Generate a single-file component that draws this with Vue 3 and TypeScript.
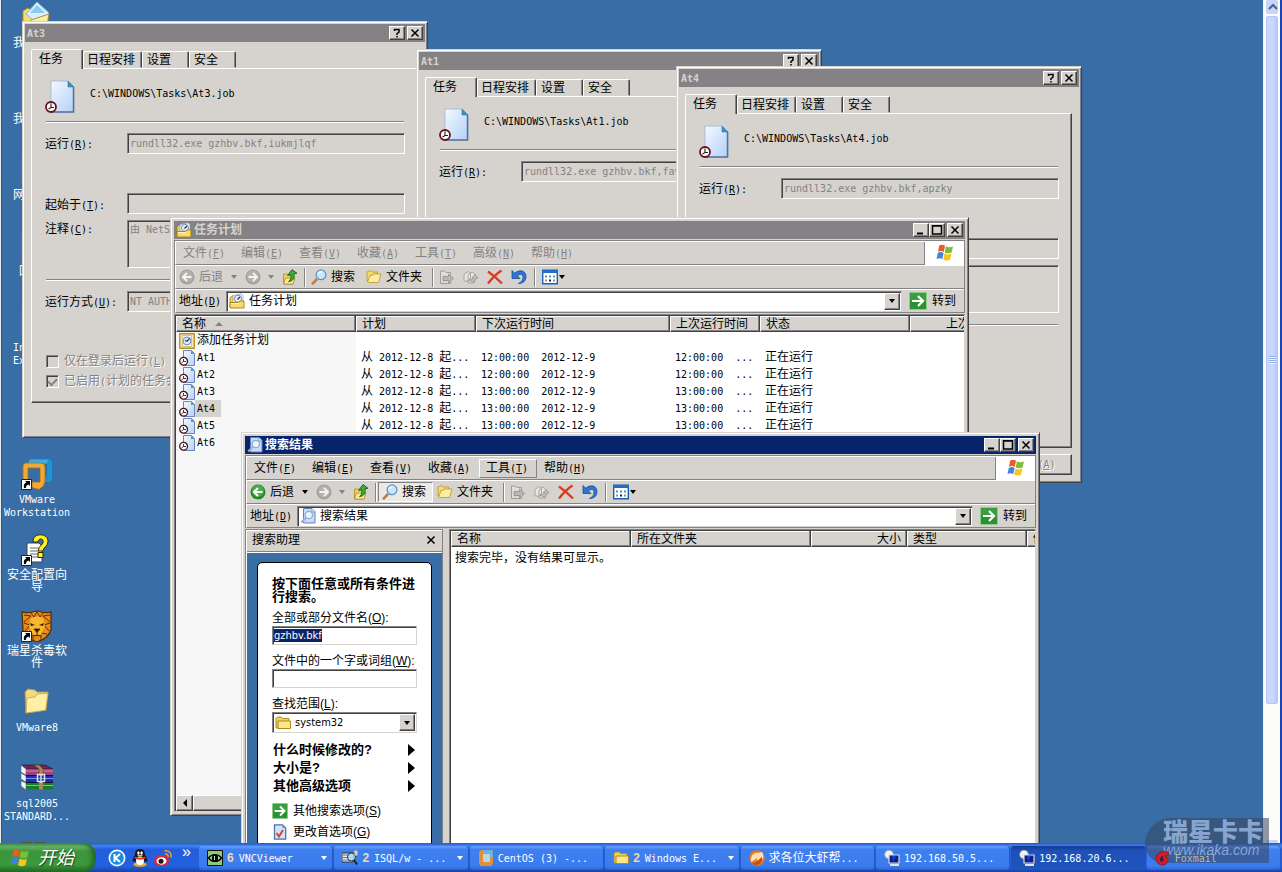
<script setup lang="ts">
import { h, onMounted, ref } from 'vue'
import type { FunctionalComponent } from 'vue'

/* Text whose half-width characters get their own face; "&X" underlines the access key X. */
const T: FunctionalComponent<{ t: string }> = (props) => {
  const runs = props.t.match(/[\x20-\x7e]+|[^\x20-\x7e]+/g) ?? []
  return h(
    'span',
    { class: 'mix' },
    runs.map((run) => {
      if (!/^[\x20-\x7e]/.test(run)) return run
      const at = run.indexOf('&')
      if (at < 0) return h('span', { class: 'half' }, run)
      return h('span', { class: 'half' }, [run.slice(0, at), h('u', run[at + 1]), run.slice(at + 2)])
    }),
  )
}
T.props = ['t']

const shortcut =
  '<path d="M.5 21.500h10v10H.5z" fill="#fff" stroke="#222"/><path d="M3 30c-.8-3 .5-5 2.500-5.500L4 23h5v5l-1.500-1.500C6 27 5 28 4.800 30z" fill="#000"/>'
const clock =
  '<circle cx="6" cy="27" r="5" fill="#fff" stroke="#6b1018" stroke-width="1.800"/><path d="M6 23.500V27.500M3.500 29l2.500-1.500H9" stroke="#222" stroke-width="1.100" fill="none"/>'

const art: Record<string, [string, string]> = {
  task: ['0 0 32 34', `<path d="M6 1h17l6 6v25H6z" fill="url(#gPaper)" stroke="#9db4d8" stroke-width=".8"/><path d="M28.500 7v25H6" fill="none" stroke="#5a6f9d" stroke-width="1.500"/><path d="M23 1l6 6h-6z" fill="#3f8fc4" stroke="#3576a8" stroke-width=".6"/>${clock}`],
  taskSmall: ['0 0 16 16', '<path d="M4.500.5h8l3 3v12h-11z" fill="url(#gPaper)" stroke="#6c86b5"/><path d="M12 .5l3.500 3.500H12z" fill="#4b9acb"/><circle cx="4.600" cy="11.300" r="3.900" fill="#fff" stroke="#4b1018" stroke-width="1.300"/><path d="M4.500 9v2.500H7M2.500 13l2-1.500" stroke="#222" fill="none" stroke-width=".9"/>'],
  addTask: ['0 0 16 16', '<path d="M.8.8h14.400v14.400H.8z" fill="#f7e9ae" stroke="#b8922a" stroke-width="1.400"/><path d="M3.500 2.500h9v11h-9z" fill="#eef5fc" stroke="#c9b36a" stroke-width=".7"/><circle cx="8" cy="8" r="3.900" fill="#dcebf8" stroke="#6f8fb3"/><path d="M8 8.300l2.500-3M8 8.300L6 7.500" stroke="#1d2c48" stroke-width="1.200"/>'],
  tasks: ['0 0 16 16', '<path d="M1 5l2-2h2v11H1z" fill="#f4d14e" stroke="#a67c12" stroke-width=".8"/><path d="M4 2.500L12 .8l2 1.700V10H4z" fill="#eef5fb" stroke="#8aa0b8" stroke-width=".7"/><circle cx="9" cy="5.800" r="3.600" fill="#e3f0fa" stroke="#7790ad"/><path d="M8.500 6.500l2.500-2.500" stroke="#223" stroke-width="1.100"/><path d="M1 15V9.500h8L11 8h4v7z" fill="#f7dc6a" stroke="#a67c12" stroke-width=".9"/><path d="M2 10.500h8" stroke="#fff3b8"/>'],
  results: ['0 0 16 16', '<path d="M3.500.5h8.500l3 3v11.500h-11.500z" fill="#c9def6" stroke="#5f83ba"/><path d="M12 .5V4h3" fill="#fff" stroke="#5f83ba" stroke-width=".8"/><circle cx="8.800" cy="7" r="3.700" fill="#e6f5ff" stroke="#8aa9cc" stroke-width="1.200"/><path d="M6 9.800L1.300 14.500" stroke="#9fb2c8" stroke-width="2.200"/>'],
  backOff: ['0 0 16 16', '<circle cx="8" cy="8" r="7.500" fill="#a3a19c"/><circle cx="8" cy="7.500" r="6" fill="#b4b2ad"/><path d="M12.500 8H4.500M8 4L4 8l4 4" stroke="#f5f4f0" stroke-width="1.900" fill="none"/>'],
  back: ['0 0 16 16', '<circle cx="8" cy="8" r="7.500" fill="#23852b"/><circle cx="8" cy="7" r="6" fill="#49ad47"/><path d="M12.500 8H4.500M8 4L4 8l4 4" stroke="#fff" stroke-width="2" fill="none"/>'],
  fwdOff: ['0 0 16 16', '<circle cx="8" cy="8" r="7.500" fill="#a3a19c"/><circle cx="8" cy="7.500" r="6" fill="#b4b2ad"/><path d="M3.500 8h8M8 4l4 4-4 4" stroke="#f5f4f0" stroke-width="1.900" fill="none"/>'],
  up: ['0 0 16 16', '<path d="M1.500 5h4l1.500 1.500H11v8.500H1.500z" fill="#f3d05a" stroke="#b3892a" stroke-width=".8"/><path d="M1.500 15L3.500 9H13l-2 6z" fill="#fae89a" stroke="#b3892a" stroke-width=".8"/><path d="M6.500 12.500C9 11 9 9 8.800 5.500L5.500 6.500 10 .6l5 3.700-3 .4C12.800 9 11.500 12 6.500 12.500z" fill="#3fae36" stroke="#17601b" stroke-width=".9"/>'],
  find: ['0 0 16 16', '<path d="M6 10L1 15.300" stroke="#c07a52" stroke-width="2.600"/><circle cx="10" cy="5.800" r="4.900" fill="#c5e7fb" stroke="#5c93c9" stroke-width="1.200"/><path d="M7.500 5a3 3 0 0 1 3-2.200" stroke="#fff" stroke-width="1.300" fill="none"/>'],
  folders: ['0 0 16 16', '<path d="M1 3l4-1.500L6.500 3h5v3L1 12z" fill="#f5d96b" stroke="#c09a34" stroke-width=".9"/><path d="M1.500 13L4 6.500h2L7 5h8l-2.500 8.500H3z" fill="#fbeea2" stroke="#c09a34" stroke-width=".9"/>'],
  moveOff: ['0 0 16 16', '<path d="M1.500 14.500V2h4L7 3.500h4.500v3M11.500 12v2.500h-10" fill="#dfddd8" stroke="#a09e99"/><path d="M4 7.500h5.500V5l5 4.500-5 4.500v-2.500H4z" fill="#b9b7b2" stroke="#8f8d88" stroke-width=".8"/>'],
  copyOff: ['0 0 16 16', '<path d="M1 5.500l4-3 2.500 1.500V9l-1 3H1zM5 6l4-3 2.500 2v9L5 14z" fill="#e8e6e1" stroke="#a09e99" stroke-width=".9"/><path d="M6 10.500l3 2.500c2 0 3.500-1 4-4h2l-3-3.500L9 9h1.800c-.8 1.500-1.600 2-2.800 1z" fill="#c2c0bb" stroke="#8f8d88" stroke-width=".8"/>'],
  remove: ['0 0 16 16', '<path d="M1 2.500C6 6 11 10.500 15 14.500M14.500 1.500C9 5 4.500 10 1 14.500" stroke="#de3a1c" stroke-width="2.300" fill="none"/>'],
  undo: ['0 0 16 16', '<path d="M1 1.500v8h8L6.500 7C9 4.500 12 5 12 8.500c0 2.500-1.500 4.500-4.500 6C12 14.500 15 12 15 7.500 15 1.500 8 0 3.800 4.300z" fill="#2f74cf" stroke="#174f9f" stroke-width=".8"/>'],
  views: ['0 0 16 16', '<path d="M.7 1.200h14.600v13.600H.7z" fill="#fff" stroke="#1760b2" stroke-width="1.400"/><path d="M0 1h16v3H0z" fill="#1f6fca"/><path d="M3 6.500h2v2H3zM7 6.500h2v2H7zM11 6.500h2v2h-2z" fill="#5c90a8"/><path d="M3 10.500h2v2H3zM11 10.500h2v2h-2z" fill="#9a9282"/><path d="M7 10.500h2v2H7z" fill="#0a246a"/>'],
  go: ['0 0 18 18', '<rect x=".5" y=".5" width="17" height="17" rx="1" fill="#2a9233" stroke="#8fcb8f"/><path d="M1 1h16v8H1z" fill="#46a94b" opacity=".5"/><path d="M3 9h11M9 4l5 5-5 5" stroke="#fff" stroke-width="2.200" fill="none"/>'],
  flag: ['0 0 20 20', '<path d="M4.200 2.600C6.500 1.200 8.500 1.800 10 2.800L8.800 9C7 8 5 7.700 3 8.800z" fill="#ea5a2a"/><path d="M10.900 3.300c2.200 1.200 4.500 1.200 7.100.1l-1.400 6.200c-2.300 1-4.700.9-6.900-.2z" fill="#7bbf35"/><path d="M2.800 9.900c2-1.200 4-.9 5.800.1L7.300 16c-1.800-1-3.800-1.300-5.800 0z" fill="#3f83dd"/><path d="M9.500 10.500c2.200 1.100 4.500 1.200 6.900.1L15 16.700c-2.300 1.100-4.600 1-6.800-.2z" fill="#f9c41d"/>'],
  folder: ['0 0 16 16', '<path d="M1 13V3.500L2.500 2h3.800l1.500 1.500H14V13z" fill="#f2cf55" stroke="#b08a24"/><path d="M3 13V6h12.500v7.500H3z" fill="#fbe68a" stroke="#b08a24"/>'],
  prefs: ['0 0 16 16', '<path d="M2.500.8h8l3.200 3.200v11.200H2.500z" fill="#cfe3fa" stroke="#4e72ad" stroke-width="1.300"/><path d="M10.500.8V4h3.200z" fill="#5b92c8"/><path d="M4.500 9l2.500 3.500L11 6" fill="none" stroke="#d8432b" stroke-width="2"/>'],
  docs: ['0 0 32 32', '<path d="M2 9l5-3 3 2h13v22H2z" fill="#f7dd6b" stroke="#b98f28"/><path d="M5 12L16 0l12 11-9 13z" fill="#d9f0fc" stroke="#86b7dc"/><path d="M9 11l7-8 8 8z" fill="#8cc9ee"/><path d="M2 29l8-11 18-6-3 17z" fill="#fdeea6" stroke="#b98f28"/>'],
  pc: ['0 0 32 32', '<path d="M1 4h26v18H1z" fill="#cfd8e4" stroke="#6b7a92"/><path d="M4 7h20v12H4z" fill="#3f7fd0"/><path d="M1 25h28v5H1z" fill="#dde2ea" stroke="#6b7a92"/>'],
  vmware: ['0 0 32 32', '<path d="M12 1h15a4 4 0 0 1 4 4v15a4 4 0 0 1-4 4h-3v-5h2V6H12v3H7V5a4 4 0 0 1 5-4z" fill="#35aeea" stroke="#1b79b8" stroke-width=".8"/><path d="M27 1a4 4 0 0 1 4 4v15a4 4 0 0 1-4 4h-5v-4h4V6z" fill="#1e93d4"/><path d="M5 5h15a4 4 0 0 1 4 4v14l-1.500 5-4.500 3.500-7-2V24h8V10H7v14H2V8a3 3 0 0 1 3-3z" fill="#f0aa34" stroke="#a86b16" stroke-width=".8"/>' + shortcut],
  wizard: ['0 0 32 32', '<path d="M6 9h12l3 3v16H6z" fill="#fff" stroke="#444"/><path d="M9 14h8M9 17h9M9 20h9M9 23h9" stroke="#666"/><path d="M12 8C12 3 15 .8 19.500.8S27 3.500 27 7.500c0 5-5 5.500-5 9.500h-4.800c0-5 5-6 5-9.300 0-1.900-1-2.700-2.500-2.700S17 6.500 17 8z" fill="#fff02a" stroke="#2b2600"/><path d="M17 18.500h5v5h-5z" fill="#fff02a" stroke="#2b2600"/>' + shortcut],
  lion: ['0 0 32 32', '<path d="M1 2C7 4 11 2 16 1c5 1 9 3 14 1v18c-2 6-8 10-14 12C9 30 3 26 2 20z" fill="#e58c1d" stroke="#4a2a05" stroke-width="1.200"/><path d="M3 5l7 1-7 6M29 5l-7 1 7 6M3 13l6 2-5 6M29 13l-6 2 5 6M10 3l3 4 3-5 3 5 3-4M6 24l6-1v7M26 24l-6-1v7" stroke="#5a3208" fill="none"/><path d="M10 8c4-2 8-2 12 0l2 8-4 9h-8l-4-9z" fill="#f9b62f"/><path d="M9 13l5 2-4 1zM23 13l-5 2 4 1z" fill="#3b1e04"/><path d="M13 19h6l-3 3.500zM16 22v3M12 26c3-1 5-1 8 0" fill="#3b1e04" stroke="#3b1e04" stroke-width=".8"/>' + shortcut],
  bigFolder: ['0 0 32 32', '<path d="M4 6l3-3 7 1 2 2h11l-2 18L5 27z" fill="#f3d97b" stroke="#b8963c"/><path d="M5 27L6 12l8-1 2-3 11-.8-2.500 17z" fill="#fdeea8" stroke="#c7a548" stroke-width=".8"/>'],
  rar: ['0 0 32 32', '<path d="M0 3h24l8 4H5z" fill="#6d2a4d" stroke="#2a0f1d" stroke-width=".6"/><path d="M0 3l5 4v6l-5-3zM0 11l5 3v6l-5-3zM0 19l5 2v7l-5-4z" fill="#f6f4f2" stroke="#666" stroke-width=".6"/><path d="M5 7h27v7H5z" fill="#a63d7c"/><path d="M5 9h27" stroke="#d48ab8"/><path d="M5 14h27v7H5z" fill="#1732b4"/><path d="M5 16.500h27" stroke="#7a92f0"/><path d="M5 21h27v6.500H5z" fill="#157d29"/><path d="M5 23.500h27" stroke="#6fd07c"/><path d="M5 13.500h27M5 20.500h27" stroke="#12122a"/><path d="M13 3h5l4 4v7h-4V7z" fill="#b08a4c" stroke="#503a18" stroke-width=".5"/><path d="M18 19h4v8.500h-4z" fill="#b08a4c"/><path d="M16.500 12.500h7v7h-7z" fill="none" stroke="#e4e4e4" stroke-width="1.500"/><path d="M20 12v9" stroke="#d8d8d8" stroke-width="1.500"/>'],
  peek: ['0 0 32 32', '<path d="M0 4h11v28H0zM13 4h12v28H13z" fill="#4d5a41"/>'],
  kugou: ['0 0 18 18', '<circle cx="9" cy="9" r="8.500" fill="#e9f6ff"/><circle cx="9" cy="9" r="6.800" fill="#1b8bd8"/><path d="M6.500 5v8M12 5L7.500 9l4.500 4" stroke="#fff" stroke-width="2" fill="none"/>'],
  penguin: ['0 0 18 18', '<ellipse cx="9" cy="15.500" rx="6.500" ry="2.300" fill="#f5a623"/><path d="M9 0c4 0 5 3 5 6 1.500 2 3 5 2 7l-2-1c-1 4-9 4-10 0l-2 1c-1-2 .5-5 2-7 0-3 1-6 5-6z" fill="#15171c"/><ellipse cx="9" cy="12" rx="4" ry="4" fill="#fff"/><path d="M4 7.500c3 1.800 7 1.800 10 0l.5 2C11 11 7 11 3.500 9.500z" fill="#e23b2c"/><ellipse cx="7.400" cy="4" rx="1.200" ry="1.700" fill="#fff"/><ellipse cx="10.600" cy="4" rx="1.200" ry="1.700" fill="#fff"/><ellipse cx="9" cy="6.700" rx="2.800" ry="1" fill="#f8b72b"/>'],
  weibo: ['0 0 18 18', '<ellipse cx="7.500" cy="11.500" rx="7.300" ry="5.500" fill="#e32532"/><ellipse cx="7.500" cy="12" rx="5" ry="3.700" fill="#fff"/><circle cx="7" cy="12.300" r="2.500" fill="#1a1a1a"/><path d="M11 5c2-.5 3.500 1 3 3M10.500 2c4-1 7.500 2 6.300 6.500" stroke="#f0a02c" stroke-width="1.500" fill="none"/>'],
  vnc: ['0 0 16 16', '<path d="M.5.5h15v15H.5z" fill="#8fca7a" stroke="#111"/><path d="M1.500 8C5 3.500 11 3.500 14.500 8 11 12.500 5 12.500 1.500 8z" fill="#cfeec2" stroke="#000" stroke-width="1.400"/><circle cx="8" cy="8" r="3.200" fill="#000"/><path d="M7.500 6v4" stroke="#cfeec2"/>'],
  isql: ['0 0 16 16', '<path d="M0 3h11v9H0z" fill="#e8edf2" stroke="#333"/><path d="M1 5h9M1 7.500h9M1 10h9" stroke="#4a78a8"/><circle cx="9.500" cy="7" r="4" fill="#aee4ee" fill-opacity=".85" stroke="#333"/><path d="M12 10l3 4.500" stroke="#222" stroke-width="2"/><path d="M12 0h4v6h-3" fill="#cfd4da" stroke="#444" stroke-width=".7"/>'],
  centos: ['0 0 16 16', '<path d="M3 0h11l1 1v13l-2 2H3L1 14V2z" fill="#e58f35"/><path d="M5 0h9l1 1v6h-3V4H5z" fill="#6fb2de"/><path d="M5 4h7v8H5z" fill="#b9d6e8"/>'],
  firefox: ['0 0 16 16', '<circle cx="8" cy="8" r="7.700" fill="#e87b1c"/><path d="M2 12C1 5 6 2 9 3l4-1c2 3 2 7-1 9-3 1-4-1-4-3-2 1-3 3-6 4z" fill="#fbe1ba"/><path d="M3 13c5 0 6-3 10-6 1 4-2 8-6 8-2 0-3-1-4-2z" fill="#c64b12"/>'],
  remote: ['0 0 16 16', '<circle cx="5" cy="4.500" r="4.300" fill="#f2f3f1" stroke="#9aa6b8" stroke-width=".7"/><path d="M5 5h10v8H5z" fill="#0b1f8a" stroke="#d8dde6" stroke-width="1.200"/><path d="M8 6h4l-3 6z" fill="#1640d8"/><path d="M6 14h9v2H6z" fill="#e4e4e0"/>'],
  foxmail: ['0 0 16 16', '<path d="M12 2C6 0 0 4 1 10c1 5 8 7 11 3 2-3 1-6-2-7l4-1-1-3z" fill="#c9202c" stroke="#8d1119" stroke-width=".7"/><path d="M8 6C4 7 4 11 7 12l2-2-1-2z" fill="#4a1a3a"/>'],
}

const Ic: FunctionalComponent<{ n: string }> = (props) =>
  h('svg', { viewBox: art[props.n][0], 'aria-hidden': 'true', innerHTML: art[props.n][1], class: 'ic' })
Ic.props = ['n']

interface Shortcut { icon: string; lines: string[] }
const shortcuts: Shortcut[] = [
  { icon: 'docs', lines: ['我的文档'] },
  { icon: 'pc', lines: ['我的电脑'] },
  { icon: 'pc', lines: ['网上邻居'] },
  { icon: 'pc', lines: ['回收站'] },
  { icon: 'pc', lines: ['Internet', 'Explorer'] },
  { icon: '', lines: [] },
  { icon: 'vmware', lines: ['VMware', 'Workstation'] },
  { icon: 'wizard', lines: ['安全配置向', '导'] },
  { icon: 'lion', lines: ['瑞星杀毒软', '件'] },
  { icon: 'bigFolder', lines: ['VMware8'] },
  { icon: 'rar', lines: ['sql2005', 'STANDARD...'] },
  { icon: 'peek', lines: [] },
]

interface Dialog { name: string; x: number; y: number; run: string }
const dialogs: Dialog[] = [
  { name: 'At3', x: 20, y: 21, run: 'rundll32.exe gzhbv.bkf,iukmjlqf' },
  { name: 'At1', x: 414, y: 49, run: 'rundll32.exe gzhbv.bkf,fav' },
  { name: 'At4', x: 674, y: 66, run: 'rundll32.exe gzhbv.bkf,apzky' },
]
const tabs = ['任务', '日程安排', '设置', '安全']

interface Explorer { id: string; title: string; icon: string; active: boolean; x: number; y: number; w: number; h: number; menu: string[]; hot?: string }
const explorers: Explorer[] = [
  { id: 'tasks', title: '任务计划', icon: 'tasks', active: false, x: 168, y: 217, w: 799, h: 599, menu: ['文件(&F)', '编辑(&E)', '查看(&V)', '收藏(&A)', '工具(&T)', '高级(&N)', '帮助(&H)'] },
  { id: 'search', title: '搜索结果', icon: 'results', active: true, x: 239, y: 432, w: 799, h: 560, menu: ['文件(&F)', '编辑(&E)', '查看(&V)', '收藏(&A)', '工具(&T)', '帮助(&H)'], hot: '工具(&T)' },
]

const jobs = [
  { name: 'At1', time: '12:00:00' },
  { name: 'At2', time: '12:00:00' },
  { name: 'At3', time: '13:00:00' },
  { name: 'At4', time: '13:00:00' },
  { name: 'At5', time: '13:00:00' },
]
const selectedJob = 'At4'

interface Task { icon: string; count?: string; label: string; more?: boolean; on?: boolean; dim?: boolean }
const taskButtons: Task[] = [
  { icon: 'vnc', count: '6', label: 'VNCViewer', more: true },
  { icon: 'isql', count: '2', label: 'ISQL/w - ...', more: true },
  { icon: 'centos', label: 'CentOS (3) -...' },
  { icon: 'folder', count: '2', label: 'Windows E...', more: true },
  { icon: 'firefox', label: '求各位大虾帮...' },
  { icon: 'remote', label: '192.168.50.5...' },
  { icon: 'remote', label: '192.168.20.6...', on: true },
  { icon: 'foxmail', label: 'Foxmail', dim: true },
]

const fileName = ref('gzhbv.bkf')
const nameBox = ref<HTMLInputElement[] | HTMLInputElement | null>(null)
onMounted(() => {
  const el = Array.isArray(nameBox.value) ? nameBox.value[0] : nameBox.value
  el?.focus({ preventScroll: true })
  el?.select()
})
</script>

<template>
  <div class="screen">
    <svg class="defs" aria-hidden="true">
      <defs>
        <linearGradient id="gPaper" x1="0" y1="0" x2="1" y2="1">
          <stop offset="0" stop-color="#f3f9ff" />
          <stop offset="1" stop-color="#b4d0f8" />
        </linearGradient>
      </defs>
    </svg>

    <div class="work">
      <main class="desktop">
        <nav class="shortcuts" aria-label="桌面">
          <div v-for="(s, i) in shortcuts" :key="i" class="shortcut">
            <Ic v-if="s.icon" :n="s.icon" />
            <T v-for="l in s.lines" :key="l" :t="l" />
          </div>
        </nav>

        <section v-for="d in dialogs" :key="d.name" class="window dialog" :style="{ left: d.x + 'px', top: d.y + 'px' }" :aria-label="d.name">
          <header class="title">
            <T class="caption" :t="d.name" />
            <button class="tb" aria-label="帮助"><svg viewBox="0 0 12 10"><path d="M3.500 3V1.500h4.500v2.500L6 5.500V7M6 8v1.500" /></svg></button>
            <button class="tb gap" aria-label="关闭"><svg viewBox="0 0 12 10"><path d="M2.500 1.500l7 7M9.500 1.500l-7 7" /></svg></button>
          </header>
          <div class="tabs" role="tablist">
            <button v-for="(t, i) in tabs" :key="t" role="tab" class="tab" :class="{ current: i === 0, wide: i === 1 }" :aria-selected="i === 0">{{ t }}</button>
          </div>
          <div class="panel">
            <div class="job"><Ic n="task" /><T :t="`C:\\WINDOWS\\Tasks\\${d.name}.job`" /></div>
            <hr />
            <div class="row">
              <label :for="d.name + 'run'"><T t="运行(&R):" /></label>
              <input :id="d.name + 'run'" class="field" :value="d.run" disabled />
            </div>
            <div class="row r-start">
              <label :for="d.name + 'dir'"><T t="起始于(&T):" /></label>
              <input :id="d.name + 'dir'" class="field" disabled />
            </div>
            <div class="row r-note">
              <label :for="d.name + 'note'"><T t="注释(&C):" /></label>
              <textarea :id="d.name + 'note'" class="field" disabled :value="d.name === 'At3' ? '由 NetS' : ''"></textarea>
            </div>
            <hr class="second" />
            <div class="row r-as">
              <label :for="d.name + 'as'"><T t="运行方式(&U):" /></label>
              <input :id="d.name + 'as'" class="field" value="NT AUTH" disabled />
            </div>
            <label class="check first"><input type="checkbox" disabled /><T t="仅在登录后运行(&L)" /></label>
            <label class="check"><input type="checkbox" checked disabled /><T t="已启用(计划的任务会" /></label>
          </div>
          <footer><button class="push" disabled><T t="应用(&A)" /></button></footer>
        </section>

        <section v-for="w in explorers" :key="w.id" class="window explorer" :class="{ active: w.active }" :style="{ left: w.x + 'px', top: w.y + 'px', width: w.w + 'px', height: w.h + 'px' }" :aria-label="w.title">
          <header class="title">
            <Ic :n="w.icon" />
            <span class="caption">{{ w.title }}</span>
            <button class="tb" aria-label="最小化"><svg viewBox="0 0 12 10"><path d="M2 8.500h6" stroke-width="2" /></svg></button>
            <button class="tb" aria-label="最大化"><svg viewBox="0 0 12 10"><path d="M1.500 .5h9v8.500h-9zM1 1h10" /></svg></button>
            <button class="tb gap" aria-label="关闭"><svg viewBox="0 0 12 10"><path d="M2.500 1.500l7 7M9.500 1.500l-7 7" /></svg></button>
          </header>

          <div class="rebar">
            <nav class="band menu">
              <button v-for="m in w.menu" :key="m" :class="{ hot: m === w.hot }"><T :t="m" /></button>
              <span class="brand"><Ic n="flag" /></span>
            </nav>
            <div class="band tools" role="toolbar">
              <button class="back" :class="{ off: !w.active }"><Ic :n="w.active ? 'back' : 'backOff'" />后退</button>
              <button class="caret c-back" :class="{ off: !w.active }" aria-label="后退列表"></button>
              <button aria-label="前进"><Ic n="fwdOff" /></button>
              <button class="caret c-fwd off" aria-label="前进列表"></button>
              <button aria-label="向上"><Ic n="up" /></button>
              <i class="sep s-up"></i>
              <button class="big" :class="{ pressed: w.active }"><Ic n="find" />搜索</button>
              <button class="big"><Ic n="folders" />文件夹</button>
              <i class="sep s-mid"></i>
              <div class="edit">
                <button aria-label="移至"><Ic n="moveOff" /></button>
                <button aria-label="复制到"><Ic n="copyOff" /></button>
                <button aria-label="删除"><Ic n="remove" /></button>
                <button aria-label="撤消"><Ic n="undo" /></button>
              </div>
              <i class="sep s-end"></i>
              <button aria-label="查看"><Ic n="views" /></button>
              <button class="caret c-view" aria-label="查看列表"></button>
            </div>
            <div class="band address">
              <label :for="w.id + 'addr'"><T t="地址(&D)" /></label>
              <div class="combo">
                <Ic :n="w.icon" />
                <input :id="w.id + 'addr'" :value="w.title" />
                <button class="drop" aria-label="展开"></button>
              </div>
              <button class="go"><Ic n="go" />转到</button>
            </div>
          </div>

          <div v-if="w.id === 'tasks'" class="list">
            <div class="clip">
              <table class="jobs">
                <colgroup><col class="w180" /><col class="w120" /><col class="w194" /><col class="w90" /><col class="w150" /><col class="w90" /></colgroup>
                <thead>
                  <tr><th>名称<i class="sort"></i></th><th>计划</th><th>下次运行时间</th><th>上次运行时间</th><th>状态</th><th class="num">上次结果</th></tr>
                </thead>
                <tbody>
                  <tr><td><span class="file"><Ic n="addTask" /><span class="fname">添加任务计划</span></span></td><td></td><td></td><td></td><td></td><td></td></tr>
                  <tr v-for="j in jobs" :key="j.name">
                    <td><span class="file"><Ic n="taskSmall" /><span class="fname" :class="{ sel: j.name === selectedJob }"><T :t="j.name" /></span></span></td>
                    <td><T t="从 2012-12-8 起..." /></td>
                    <td><T :t="`${j.time}  2012-12-9`" /></td>
                    <td><T :t="`${j.time}  ...`" /></td>
                    <td>正在运行</td>
                    <td></td>
                  </tr>
                  <tr><td><span class="file"><Ic n="taskSmall" /><span class="fname"><T t="At6" /></span></span></td><td></td><td></td><td></td><td></td><td></td></tr>
                </tbody>
              </table>
              <div class="rest"></div>
            </div>
            <div class="hscroll"><button class="left" aria-label="向左滚动"></button><span class="thumb"></span></div>
          </div>

          <div v-else class="split">
            <aside class="side">
              <header><span>搜索助理</span><button aria-label="关闭"><svg viewBox="0 0 10 10"><path d="M1.500 1.500l7 7M8.500 1.500l-7 7" /></svg></button></header>
              <div class="tray">
                <form class="card" @submit.prevent>
                  <h2>按下面任意或所有条件进<br />行搜索。</h2>
                  <label for="fname">全部或部分文件名(<u>O</u>):</label>
                  <input id="fname" ref="nameBox" v-model="fileName" class="box" />
                  <label for="word">文件中的一个字或词组(<u>W</u>):</label>
                  <input id="word" class="box" />
                  <label for="scope">查找范围(<u>L</u>):</label>
                  <div class="combo scope"><Ic n="folder" /><select id="scope"><option>system32</option></select><i class="drop"></i></div>
                  <button class="more top">什么时候修改的?<i></i></button>
                  <button class="more">大小是?<i></i></button>
                  <button class="more">其他高级选项<i></i></button>
                  <a href="#" class="link top"><Ic n="go" /><span>其他搜索选项(<u>S</u>)</span></a>
                  <a href="#" class="link"><Ic n="prefs" /><span>更改首选项(<u>G</u>)</span></a>
                </form>
              </div>
            </aside>
            <div class="list">
              <div class="clip">
                <table class="found">
                  <colgroup><col class="w180" /><col class="w180" /><col class="w96" /><col class="w120" /><col class="w90" /></colgroup>
                  <thead><tr><th>名称</th><th>所在文件夹</th><th class="num">大小</th><th>类型</th><th>修改日期</th></tr></thead>
                </table>
                <p>搜索完毕，没有结果可显示。</p>
              </div>
            </div>
          </div>
        </section>
      </main>

      <div class="vscroll" aria-hidden="true">
        <span class="vbtn"><svg viewBox="0 0 14 14"><path d="M3 9l4-4 4 4" /></svg></span>
        <span class="vthumb"><i></i></span>
        <span class="vbtn"></span>
      </div>
    </div>

    <footer class="taskbar">
      <button class="start"><Ic n="flag" /><span>开始</span></button>
      <div class="quick">
        <button aria-label="K"><Ic n="kugou" /></button>
        <button aria-label="QQ"><Ic n="penguin" /></button>
        <button aria-label="微博"><Ic n="weibo" /></button>
        <span class="chev">»</span>
      </div>
      <button v-for="t in taskButtons" :key="t.label" class="task" :class="{ on: t.on, dim: t.dim }">
        <Ic :n="t.icon" />
        <b v-if="t.count">{{ t.count }}</b>
        <T class="name" :t="t.label" />
        <i v-if="t.more" class="tri"></i>
      </button>
    </footer>

    <div class="mark"><strong>瑞星卡卡</strong><em>www.ikaka.com</em></div>
  </div>
</template>

<style>
html, body, #app { height: 100%; }
body { margin: 0; overflow: hidden; }
.mix { white-space: pre; }
.half { font: 10px "DejaVu Sans Mono", "Liberation Mono", monospace; line-height: inherit; font-weight: inherit; }
.ic { width: 16px; height: 16px; flex: none; display: block; }
</style>

<style scoped>
* { box-sizing: border-box; }
.screen {
  --face: #d6d3ce; --dark: #424142; --mid: #848284; --sea: #396da5; --navy: #08246b;
  height: 100%; display: flex; flex-direction: column; position: relative; overflow: hidden;
  font: 12px/14px "Liberation Sans", "Noto Sans CJK SC", sans-serif; color: #000;
}
.defs { position: absolute; width: 0; height: 0; }
button, input, textarea, select { font: inherit; color: inherit; margin: 0; padding: 0; border: 0; border-radius: 0; background: none; outline: none; }
button { white-space: nowrap; }
.work { flex: 1; min-height: 0; display: flex; background: #1a43b8; padding-right: 2px; border-left: 1px solid #e8ecec; }
.desktop { flex: 1; min-width: 0; position: relative; overflow: hidden; background: var(--sea); border-left: 1px solid #2d5a88; }

.shortcuts { width: 70px; color: #fff; }
.shortcut { height: 76px; padding-top: 2px; display: flex; flex-direction: column; align-items: center; line-height: 12px; }
.shortcut .ic { width: 32px; height: 32px; margin-bottom: 3px; }

.window { position: absolute; background: var(--face); border: 1px solid; border-color: var(--face) var(--dark) var(--dark) var(--face); box-shadow: inset 1px 1px #fff, inset -1px -1px var(--mid); }
.title { height: 18px; display: flex; align-items: center; background: var(--mid); color: var(--face); padding: 0 2px; font-weight: bold; }
.active .title { background: var(--navy); color: #fff; }
.title .caption { flex: 1; }
.title > .ic { margin-right: 2px; }
.tb { width: 16px; height: 14px; background: var(--face); border: 1px solid; border-color: #fff var(--dark) var(--dark) #fff; box-shadow: inset -1px -1px var(--mid); display: grid; place-items: center; }
.tb.gap { margin-left: 2px; }
.tb svg { width: 12px; height: 10px; fill: none; stroke: #000; stroke-width: 1.500; }

.dialog { width: 406px; padding: 2px; }
.tabs { display: flex; align-items: flex-end; height: 19px; margin: 7px 0 0 6px; }
.tab { width: 47px; height: 17px; padding-left: 4px; text-align: left; border: 1px solid; border-color: #fff var(--dark) transparent #fff; border-radius: 2px 2px 0 0; box-shadow: inset -1px 0 var(--mid); }
.tab.wide { width: 59px; padding-left: 3px; }
.tab.current { width: 52px; height: 20px; padding: 0 0 1px 7px; margin-bottom: -1px; background: var(--face); position: relative; z-index: 1; border-bottom: 0; }
.panel { margin: 0 7px 0 6px; height: 335px; padding: 11px 12px 0 13px; border: 1px solid; border-color: #fff var(--dark) var(--dark) #fff; box-shadow: inset -1px -1px var(--mid); }
.job { display: flex; gap: 13px; height: 34px; line-height: 26px; }
.job .ic { width: 32px; height: 34px; }
hr { margin: 7px 1px 10px; border: 0; border-top: 1px solid var(--mid); border-bottom: 1px solid #fff; }
hr.second { margin-top: 11px; }
.row { display: flex; height: 21px; line-height: 22px; }
.row label { width: 82px; flex: none; }
.field { flex: 1; min-width: 0; resize: none; padding: 0 2px; border: 1px solid; border-color: var(--mid) #fff #fff var(--mid); box-shadow: inset 1px 1px var(--dark); color: #848284; font: 10px/18px "DejaVu Sans Mono", "Noto Sans CJK SC", monospace; }
.r-start { margin-top: 39px; line-height: 24px; }
.r-note { margin-top: 6px; height: 48px; line-height: 18px; }
.r-as .field { max-width: 160px; }
.check { display: flex; align-items: center; gap: 5px; height: 13px; margin: 7px 1px 0; color: var(--mid); text-shadow: 1px 1px #fff; white-space: nowrap; }
.check.first { margin-top: 43px; }
.check input { appearance: none; width: 13px; height: 13px; border: 1px solid; border-color: var(--mid) #fff #fff var(--mid); box-shadow: inset 1px 1px var(--dark); display: grid; place-items: center; }
.check input:checked::after { content: ""; width: 7px; height: 4px; border: solid var(--mid); border-width: 0 0 2px 2px; transform: rotate(-45deg); margin-bottom: 2px; }
.dialog footer { display: flex; justify-content: flex-end; padding: 6px 7px 5px; }
.push { width: 75px; height: 21px; border: 1px solid; border-color: #fff var(--dark) var(--dark) #fff; box-shadow: inset -1px -1px var(--mid); color: var(--mid); text-shadow: 1px 1px #fff; }

.explorer { padding: 3px; display: flex; flex-direction: column; }
.explorer .title { flex: none; }
.rebar { flex: none; margin: 1px 0; border-top: 1px solid var(--mid); border-left: 1px solid var(--mid); border-right: 1px solid var(--mid); }
.band { height: 24px; display: flex; align-items: center; border-top: 1px solid #fff; border-bottom: 1px solid var(--mid); border-left: 1px solid #fff; }
.menu button { width: 58px; height: 19px; border: 1px solid transparent; padding-right: 2px; }
.menu { color: var(--mid); }
.active .menu { color: #000; }
.menu .hot { border-color: #fff var(--mid) var(--mid) #fff; }
.brand { margin-left: auto; width: 40px; height: 23px; background: #fff; border-left: 1px solid var(--mid); display: grid; place-items: center; }
.brand .ic { width: 20px; height: 20px; }
.tools { padding-left: 3px; }
.tools button { display: flex; align-items: center; gap: 4px; height: 20px; flex: none; }
.tools .off { color: var(--mid); }
.caret::before, .drop::before, .tri { content: ""; border: solid transparent; border-width: 4px 3px 0; border-top-color: currentColor; }
.c-back { width: 22px; padding-left: 8px; }
.c-fwd { width: 21px; padding-left: 7px; }
.c-view { padding-left: 1px; }
.sep { width: 2px; height: 19px; border-left: 1px solid var(--mid); border-right: 1px solid #fff; flex: none; }
.s-up { margin: 0 1px 0 6px; }
.s-mid { margin: 0 5px 0 3px; }
.s-end { margin: 0 6px 0 7px; }
.tools .big { padding: 0 6px 0 3px; border: 1px solid transparent; }
.tools .pressed { border-color: var(--mid) #fff #fff var(--mid); background: #ebe9e6; }
.edit { display: flex; gap: 8px; }
.address label { width: 50px; padding-left: 3px; flex: none; }
.combo { display: flex; align-items: center; height: 21px; flex: 1; min-width: 0; background: #fff; border: 1px solid; border-color: var(--mid) var(--face) var(--face) var(--mid); box-shadow: inset 1px 1px var(--dark); padding: 1px 1px 1px 2px; }
.combo input, .combo select { flex: 1; min-width: 0; appearance: none; padding-left: 4px; }
.drop { width: 16px; height: 17px; flex: none; display: grid; place-items: center; background: var(--face); border: 1px solid; border-color: #fff var(--dark) var(--dark) #fff; box-shadow: inset -1px -1px var(--mid); }
.go { display: flex; align-items: center; gap: 5px; padding: 0 8px 0 7px; }
.go .ic { width: 18px; height: 18px; }

.list { flex: 1; min-width: 0; min-height: 0; display: flex; flex-direction: column; background: #fff; border: 1px solid; border-color: var(--mid) var(--face) var(--face) var(--mid); box-shadow: inset 1px 1px var(--dark); padding: 1px 0 0 1px; overflow: hidden; }
.clip { flex: 1; min-height: 0; overflow: hidden; display: flex; flex-direction: column; }
table { table-layout: fixed; border-collapse: separate; border-spacing: 0; flex: none; }
.jobs { width: 824px; }
.found { width: 666px; }
.w180 { width: 180px; } .w120 { width: 120px; } .w194 { width: 194px; } .w90 { width: 90px; } .w96 { width: 96px; } .w150 { width: 150px; }
th { height: 16px; padding: 0 5px; font-weight: normal; text-align: left; line-height: 14px; background: var(--face); border: 1px solid; border-color: #fff var(--dark) var(--dark) #fff; border-top-width: 0; box-shadow: inset -1px -1px var(--mid), inset 0 1px #fff; white-space: nowrap; overflow: hidden; }
th.num { text-align: right; }
.sort { display: inline-block; margin-left: 9px; border: solid transparent; border-width: 0 4px 4px; border-bottom-color: var(--mid); vertical-align: 2px; }
td { height: 17px; padding: 0 5px; line-height: 17px; white-space: nowrap; overflow: hidden; }
td:first-child { background: #f7f7f7; padding: 0 0 0 3px; }
.file { display: flex; align-items: center; height: 17px; }
.fname { padding: 0 6px 0 2px; height: 17px; }
.sel { background: var(--face); }
.rest { width: 180px; flex: 1; background: #f7f7f7; }
.hscroll { display: flex; height: 16px; flex: none; }
.left, .thumb { background: var(--face); border: 1px solid; border-color: #fff var(--dark) var(--dark) #fff; box-shadow: inset -1px -1px var(--mid); }
.left { width: 17px; display: grid; place-items: center; }
.left::before { content: ""; border: solid transparent; border-width: 4px 4px 4px 0; border-right-color: #000; }
.thumb { flex: 1; }

.split { flex: 1; min-height: 0; display: flex; gap: 6px; }
.side { width: 198px; flex: none; display: flex; flex-direction: column; border: 1px solid var(--mid); box-shadow: inset 1px 1px #fff; padding: 1px 0 0 1px; }
.side header { height: 21px; flex: none; display: flex; justify-content: space-between; align-items: center; padding: 0 6px 2px 5px; border-bottom: 1px solid var(--mid); }
.side header svg { width: 10px; height: 10px; display: block; fill: none; stroke: #000; stroke-width: 1.500; }
.tray { flex: 1; background: var(--sea); border-top: 1px solid #fff; padding: 9px 10px 0; }
.card { height: 100%; background: #fff; border: 1px solid #000; border-radius: 5px 5px 0 0; padding: 14px 14px; display: flex; flex-direction: column; }
.card h2 { margin: 0 0 8px; font-size: 13px; line-height: 13px; white-space: nowrap; }
.card label { line-height: 14px; margin-bottom: 1px; white-space: nowrap; }
.box { height: 19px; margin-bottom: 9px; padding: 0 1px; border: 1px solid; border-color: var(--mid) var(--face) var(--face) var(--mid); box-shadow: inset 1px 1px var(--dark); }
.box, .scope select { font: 11px/13px "DejaVu Sans Condensed", "Liberation Sans", sans-serif; }
.box::selection { background: var(--navy); color: #fff; }
.scope { flex: none; }
.more { display: flex; justify-content: space-between; align-items: center; height: 18px; padding: 0 2px 0 1px; font-size: 13px; font-weight: bold; }
.more.top { margin-top: 8px; }
.more i { border: solid transparent; border-width: 6px 0 6px 7px; border-left-color: #000; }
.link { display: flex; align-items: center; gap: 5px; height: 21px; color: #000; text-decoration: none; white-space: nowrap; }
.link.top { margin-top: 5px; }
.list p { margin: 4px 4px; }

.vscroll { width: 17px; flex: none; display: flex; flex-direction: column; background: #fcfcfa; padding: 0 2px; border-left: 1px solid #eef3fb; }
.vbtn { height: 14px; flex: none; background: #c6d6fb; border-radius: 2px; }
.vbtn:last-child { height: 3px; }
.vbtn svg { width: 14px; height: 14px; display: block; fill: none; stroke: #4d6185; stroke-width: 2; }
.vthumb { flex: 1; margin: 2px 0 136px; background: linear-gradient(90deg, #c9d8fc 60%, #b3c9f6); border: 1px solid #b4c8f3; border-radius: 2px; display: grid; place-items: center; }
.vthumb i { width: 7px; height: 8px; background: repeating-linear-gradient(#8fb0ea 0 1px, #eef4ff 1px 2px); }

.taskbar { flex: none; height: 29px; display: flex; background: linear-gradient(#2159cf, #3f84f0 10%, #245edb 22%, #2460df 80%, #1941a5); color: #fff; }
.start { width: 96px; display: flex; align-items: center; gap: 7px; padding-left: 9px; background: linear-gradient(#4f9a4f, #64b564 12%, #3c943c 30%, #3a9a3a 75%, #246b24); border-radius: 0 12px 12px 0; box-shadow: inset -4px 0 5px #23682a; font-size: 18px; line-height: 24px; font-style: italic; text-shadow: 1px 1px 1px #20401f; }
.start .ic { width: 22px; height: 22px; }
.quick { width: 103px; flex: none; display: flex; align-items: center; gap: 5px; padding-left: 12px; }
.quick .ic { width: 18px; height: 18px; }
.chev { font-size: 16px; line-height: 18px; align-self: flex-start; margin-left: 5px; }
.task { flex: 1; min-width: 0; height: 24px; margin: 3px 1px 0 0; padding: 0 6px 0 8px; display: flex; align-items: center; background: linear-gradient(#6a9ffb, #3f80f0 15%, #3a7bee 85%, #2b62cf); border-radius: 3px; box-shadow: inset -1px 0 #2456c0; text-align: left; }
.task .ic { margin-right: 4px; }
.task b { color: #eed8b0; margin-right: 5px; font-size: 12px; }
.tri { margin-left: auto; }
.task.on { background: linear-gradient(#153c92, #1e50b8 20%, #1f54bd); }
.task.dim { color: #bdbb92; }
.task.dim .ic, .task.dim .name { position: relative; z-index: 2; }

.mark { position: absolute; z-index: 1; right: 13px; bottom: 9px; width: 124px; height: 45px; padding: 3px 0 0 18px; display: flex; flex-direction: column; background: rgba(55, 70, 95, .55); border-radius: 30px 0 0 22px; color: rgba(150, 180, 222, .85); white-space: nowrap; }
.mark strong { font-size: 25px; line-height: 22px; font-weight: 900; }
.mark em { font-size: 14px; line-height: 14px; }
</style>
